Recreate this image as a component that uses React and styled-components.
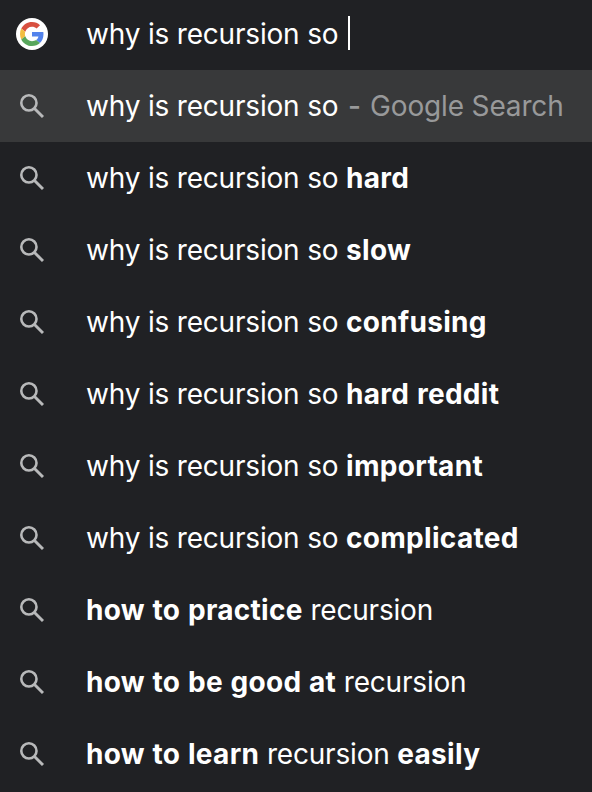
import React from "react";
import styled, { createGlobalStyle } from "styled-components";

const Global = createGlobalStyle`
  body { margin: 0; background: #202124; overflow: hidden; }
`;
const Page = styled.main`
  width: 592px;
  height: 792px;
  display: flex;
  flex-direction: column;
  overflow: hidden;
  background: #202124;
  color: #fff;
  font-family: Inter, "Liberation Sans", sans-serif;
  font-size: 28px;
`;
const Row = styled.div`
  height: ${(p) => (p.$first ? 70 : 72)}px;
  padding-bottom: ${(p) => (p.$first ? 2 : 0)}px;
  box-sizing: border-box;
  flex: none;
  display: flex;
  align-items: center;
  background: ${(p) => (p.$active ? "#38393a" : "transparent")};
`;
const IconSlot = styled.div`
  width: 64px;
  margin-right: 22px;
  flex: none;
  display: flex;
  justify-content: center;
`;
const Logo = styled.div`
  width: 32px;
  height: 32px;
  border-radius: 50%;
  background: #fff;
  display: flex;
  align-items: center;
  justify-content: center;
`;
const Text = styled.span`
  white-space: pre;
  line-height: 32px;
  letter-spacing: ${(p) => (p.$bold ? 0.3 : -0.19)}px;
  word-spacing: ${(p) => (p.$bold ? 0.7 : 0)}px;
  font-weight: ${(p) => (p.$bold ? 700 : 430)};
`;
const Hint = styled(Text)`
  color: #98999a;
  letter-spacing: -0.15px;
`;
const Dash = styled(Hint)`
  width: 22px;
  padding-left: 2px;
  font-weight: 500;
`;
const Caret = styled.span`
  width: 2px;
  height: 34px;
  margin: 0 0 2px 2px;
  background: #fff;
`;

const Google = () => (
  <svg width="24" height="24" viewBox="0 0 48 48">
    <path fill="#d85040" d="M24 9.5c3.54 0 6.71 1.22 9.21 3.6l6.85-6.85C35.9 2.38 30.47 0 24 0 14.62 0 6.51 5.38 2.56 13.22l7.98 6.19C12.43 13.72 17.74 9.5 24 9.5z" />
    <path fill="#5383ec" d="M46.98 24.55c0-1.57-.15-3.09-.38-4.55H24v9.02h12.94c-.58 2.96-2.26 5.48-4.78 7.18l7.73 6c4.51-4.18 7.09-10.36 7.09-17.65z" />
    <path fill="#f1be42" d="M10.53 28.59c-.48-1.45-.76-2.99-.76-4.59s.27-3.14.76-4.59l-7.98-6.19C.92 16.46 0 20.12 0 24c0 3.88.92 7.54 2.56 10.78l7.97-6.19z" />
    <path fill="#58a65c" d="M24 48c6.48 0 11.93-2.13 15.89-5.81l-7.73-6c-2.15 1.45-4.92 2.3-8.16 2.3-6.26 0-11.57-4.22-13.47-9.91l-7.98 6.19C6.51 42.62 14.62 48 24 48z" />
  </svg>
);
const Search = () => (
  <svg width="32" height="32" viewBox="0 0 32 32" fill="none" stroke="#b8b9ba">
    <circle cx="12.9" cy="12.9" r="7.6" strokeWidth="2.6" />
    <path d="M18.2 18.2L27 27" strokeWidth="2.9" />
  </svg>
);

const Q = "why is recursion so ";
const rows = [
  [[Q], ["hard", 1]],
  [[Q], ["slow", 1]],
  [[Q], ["confusing", 1]],
  [[Q], ["hard reddit", 1]],
  [[Q], ["important", 1]],
  [[Q], ["complicated", 1]],
  [["how to practice ", 1], ["recursion"]],
  [["how to be good at ", 1], ["recursion"]],
  [["how to learn ", 1], ["recursion "], ["easily", 1]],
];

export default function App() {
  return (
    <Page>
      <Global />
      <Row $first>
        <IconSlot><Logo><Google /></Logo></IconSlot>
        <Text>{Q}</Text><Caret />
      </Row>
      <Row $active>
        <IconSlot><Search /></IconSlot>
        <Text>{Q}</Text><Dash>-</Dash><Hint>Google Search</Hint>
      </Row>
      {rows.map((parts, i) => (
        <Row key={i}>
          <IconSlot><Search /></IconSlot>
          {parts.map(([t, b], j) => <Text key={j} $bold={b}>{t}</Text>)}
        </Row>
      ))}
    </Page>
  );
}
